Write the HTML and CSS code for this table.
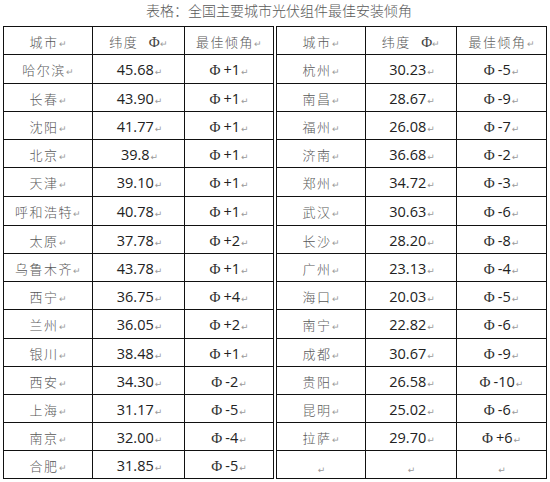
FILE: index.html
```html
<!DOCTYPE html>
<html lang="zh">
<head>
<meta charset="utf-8">
<link rel="stylesheet" href="styles.css">
</head>
<body>
<div class="title">表格：全国主要城市光伏组件最佳安装倾角</div>
<div class="tables">
  <div class="grid g1">
    <div class="cell hd">城市<i>↵</i></div><div class="cell hd">纬度 <b>Φ</b><i>↵</i></div><div class="cell hd">最佳倾角<i>↵</i></div>
    <div class="cell city">哈尔滨<i>↵</i></div><div class="cell num">45.68<i>↵</i></div><div class="cell ang"><b>Φ</b>+1<i>↵</i></div>
    <div class="cell city">长春<i>↵</i></div><div class="cell num">43.90<i>↵</i></div><div class="cell ang"><b>Φ</b>+1<i>↵</i></div>
    <div class="cell city">沈阳<i>↵</i></div><div class="cell num">41.77<i>↵</i></div><div class="cell ang"><b>Φ</b>+1<i>↵</i></div>
    <div class="cell city">北京<i>↵</i></div><div class="cell num">39.8<i>↵</i></div><div class="cell ang"><b>Φ</b>+1<i>↵</i></div>
    <div class="cell city">天津<i>↵</i></div><div class="cell num">39.10<i>↵</i></div><div class="cell ang"><b>Φ</b>+1<i>↵</i></div>
    <div class="cell city">呼和浩特<i>↵</i></div><div class="cell num">40.78<i>↵</i></div><div class="cell ang"><b>Φ</b>+1<i>↵</i></div>
    <div class="cell city">太原<i>↵</i></div><div class="cell num">37.78<i>↵</i></div><div class="cell ang"><b>Φ</b>+2<i>↵</i></div>
    <div class="cell city">乌鲁木齐<i>↵</i></div><div class="cell num">43.78<i>↵</i></div><div class="cell ang"><b>Φ</b>+1<i>↵</i></div>
    <div class="cell city">西宁<i>↵</i></div><div class="cell num">36.75<i>↵</i></div><div class="cell ang"><b>Φ</b>+4<i>↵</i></div>
    <div class="cell city">兰州<i>↵</i></div><div class="cell num">36.05<i>↵</i></div><div class="cell ang"><b>Φ</b>+2<i>↵</i></div>
    <div class="cell city">银川<i>↵</i></div><div class="cell num">38.48<i>↵</i></div><div class="cell ang"><b>Φ</b>+1<i>↵</i></div>
    <div class="cell city">西安<i>↵</i></div><div class="cell num">34.30<i>↵</i></div><div class="cell ang"><b>Φ</b>-2<i>↵</i></div>
    <div class="cell city">上海<i>↵</i></div><div class="cell num">31.17<i>↵</i></div><div class="cell ang"><b>Φ</b>-5<i>↵</i></div>
    <div class="cell city">南京<i>↵</i></div><div class="cell num">32.00<i>↵</i></div><div class="cell ang"><b>Φ</b>-4<i>↵</i></div>
    <div class="cell city">合肥<i>↵</i></div><div class="cell num">31.85<i>↵</i></div><div class="cell ang"><b>Φ</b>-5<i>↵</i></div>
  </div>
  <div class="grid g2">
    <div class="cell hd">城市<i>↵</i></div><div class="cell hd">纬度 <b>Φ</b><i>↵</i></div><div class="cell hd">最佳倾角<i>↵</i></div>
    <div class="cell city">杭州<i>↵</i></div><div class="cell num">30.23<i>↵</i></div><div class="cell ang"><b>Φ</b>-5<i>↵</i></div>
    <div class="cell city">南昌<i>↵</i></div><div class="cell num">28.67<i>↵</i></div><div class="cell ang"><b>Φ</b>-9<i>↵</i></div>
    <div class="cell city">福州<i>↵</i></div><div class="cell num">26.08<i>↵</i></div><div class="cell ang"><b>Φ</b>-7<i>↵</i></div>
    <div class="cell city">济南<i>↵</i></div><div class="cell num">36.68<i>↵</i></div><div class="cell ang"><b>Φ</b>-2<i>↵</i></div>
    <div class="cell city">郑州<i>↵</i></div><div class="cell num">34.72<i>↵</i></div><div class="cell ang"><b>Φ</b>-3<i>↵</i></div>
    <div class="cell city">武汉<i>↵</i></div><div class="cell num">30.63<i>↵</i></div><div class="cell ang"><b>Φ</b>-6<i>↵</i></div>
    <div class="cell city">长沙<i>↵</i></div><div class="cell num">28.20<i>↵</i></div><div class="cell ang"><b>Φ</b>-8<i>↵</i></div>
    <div class="cell city">广州<i>↵</i></div><div class="cell num">23.13<i>↵</i></div><div class="cell ang"><b>Φ</b>-4<i>↵</i></div>
    <div class="cell city">海口<i>↵</i></div><div class="cell num">20.03<i>↵</i></div><div class="cell ang"><b>Φ</b>-5<i>↵</i></div>
    <div class="cell city">南宁<i>↵</i></div><div class="cell num">22.82<i>↵</i></div><div class="cell ang"><b>Φ</b>-6<i>↵</i></div>
    <div class="cell city">成都<i>↵</i></div><div class="cell num">30.67<i>↵</i></div><div class="cell ang"><b>Φ</b>-9<i>↵</i></div>
    <div class="cell city">贵阳<i>↵</i></div><div class="cell num">26.58<i>↵</i></div><div class="cell ang"><b>Φ</b>-10<i>↵</i></div>
    <div class="cell city">昆明<i>↵</i></div><div class="cell num">25.02<i>↵</i></div><div class="cell ang"><b>Φ</b>-6<i>↵</i></div>
    <div class="cell city">拉萨<i>↵</i></div><div class="cell num">29.70<i>↵</i></div><div class="cell ang"><b>Φ</b>+6<i>↵</i></div>
    <div class="cell empty"><i>↵</i></div><div class="cell empty"><i>↵</i></div><div class="cell empty"><i>↵</i></div>
  </div>
</div>
</body>
</html>
```
FILE: styles.css
```css
html, body {
  margin: 0;
  padding: 0;
  background: #fff;
}
body {
  width: 550px;
  height: 482px;
  overflow: hidden;
  font-family: "Noto Sans CJK SC", sans-serif;
}
.title {
  height: 26px;
  box-sizing: border-box;
  padding-top: 0;
  padding-left: 8px;
  text-align: center;
  font-size: 14px;
  line-height: 20px;
  color: #5a5a5a;
  font-weight: 300;
}
.tables {
  display: flex;
  gap: 2px;
  padding-left: 3px;
}
.grid {
  display: grid;
  background: #111;
  padding: 1px;
  gap: 1px;
  grid-template-rows: 27px 28px 27px 27px 27px 28px 28px 27px 27px 27px 28px 27px 27px 27px 27px 27px;
}
.g1 { grid-template-columns: 88px 91px 88px; }
.g2 { grid-template-columns: 88px 90px 89px; }
.cell {
  background: #fff;
  text-align: center;
  padding-top: 5px;
  line-height: 20px;
  box-sizing: border-box;
  white-space: nowrap;
}
.cell i {
  font-style: normal;
  font-family: "DejaVu Sans", sans-serif;
  font-size: 9px;
  color: #9a9a9a;
  margin-left: 1px;
  letter-spacing: 0;
}
.hd, .city {
  font-size: 13px;
  letter-spacing: 1.5px;
  color: #585858;
  font-weight: 300;
}
.hd i, .city i { margin-left: 0; }
.hd b {
  font-weight: normal;
  font-family: "Liberation Serif", serif;
  font-size: 15px;
  color: #444;
  margin-left: 6px;
  letter-spacing: 0;
}
.num {
  font-family: "Open Sans", sans-serif;
  font-size: 14.5px;
  color: #222;
  padding-left: 2px;
}
.ang {
  font-family: "Open Sans", sans-serif;
  font-size: 14.5px;
  color: #222;
}
.ang b {
  font-weight: normal;
  font-family: "Liberation Serif", serif;
  font-size: 15px;
  color: #333;
  margin-right: 3px;
}
```
